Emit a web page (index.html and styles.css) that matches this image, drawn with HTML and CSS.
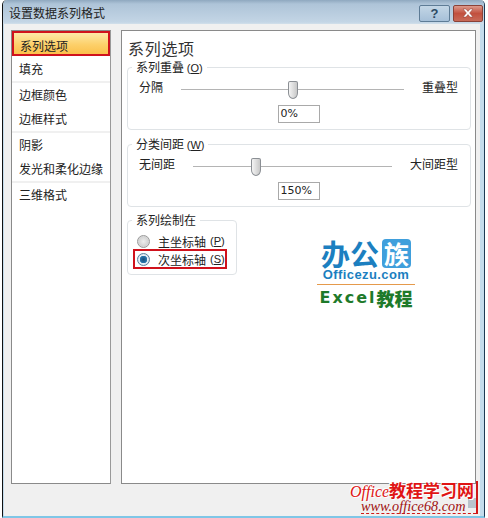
FILE: index.html
```html
<!DOCTYPE html>
<html lang="zh-CN">
<head>
  <meta charset="UTF-8">
  <title>设置数据系列格式</title>
  <link rel="stylesheet" href="styles.css">
</head>
<body>
  <div class="window">
    <header class="titlebar">
      <span class="title">设置数据系列格式</span>
      <div class="caption-btns">
        <span class="cap-btn help">?</span>
        <span class="cap-btn close">
          <svg width="14" height="10" viewBox="0 0 14 10"><path d="M2 1h3l2 2.4L9 1h3L8.6 5 12 9H9L7 6.6 5 9H2l3.4-4z" fill="#fff" stroke="#8a3a30" stroke-width=".5"/></svg>
        </span>
      </div>
    </header>

    <div class="client">
      <nav class="side">
        <div class="side-group">
          <div class="side-item selected">系列选项</div>
          <div class="side-item">填充</div>
        </div>
        <div class="side-group">
          <div class="side-item">边框颜色</div>
          <div class="side-item">边框样式</div>
        </div>
        <div class="side-group">
          <div class="side-item">阴影</div>
          <div class="side-item">发光和柔化边缘</div>
        </div>
        <div class="side-group">
          <div class="side-item">三维格式</div>
        </div>
      </nav>

      <main class="panel">
        <h1 class="panel-title">系列选项</h1>

        <fieldset class="group">
          <legend>系列重叠 <span class="key">(<u>O</u>)</span></legend>
          <div class="slider-row">
            <span>分隔</span>
            <div class="track"><span class="thumb" style="left:107px"></span></div>
            <span>重叠型</span>
          </div>
          <div class="value">0%</div>
        </fieldset>

        <fieldset class="group">
          <legend>分类间距 <span class="key">(<u>W</u>)</span></legend>
          <div class="slider-row">
            <span>无间距</span>
            <div class="track"><span class="thumb" style="left:58px"></span></div>
            <span>大间距型</span>
          </div>
          <div class="value">150%</div>
        </fieldset>

        <div class="bottom-row">
          <fieldset class="group plot-on">
            <legend>系列绘制在</legend>
            <div class="radio-row"><span class="radio"></span>主坐标轴 <span class="key">(<u>P</u>)</span></div>
            <div class="radio-row marked"><span class="radio on"></span>次坐标轴 <span class="key">(<u>S</u>)</span></div>
          </fieldset>

          <div class="logo">
            <div class="logo-cn">办公<span class="logo-box">族</span></div>
            <div class="logo-en">Officezu.com</div>
            <div class="logo-sub">Excel<span>教程</span></div>
          </div>
        </div>
      </main>
    </div>

    <div class="grip"></div>
    <div class="watermark">
      <div class="wm-top">Office<b>教程学习网</b></div>
      <div class="wm-url">www.office68.com</div>
    </div>
  </div>
</body>
</html>
```

FILE: styles.css
```css
:root {
  --cjk: "Noto Sans CJK SC", "Liberation Sans", sans-serif;
  --line: #dfe3e6;
  --panel-border: #8a8a8a;
  --text: #222;
}
html, body {
  margin: 0;
  padding: 0;
  background: #fff;
}
body {
  width: 488px;
  height: 518px;
  overflow: hidden;
  font-family: var(--cjk);
  font-size: 12px;
  color: var(--text);
}
.window {
  position: relative;
  box-sizing: border-box;
  margin-left: 2px;
  width: 483px;
  height: 518px;
  display: flex;
  flex-direction: column;
  background: #c4dcec;
  border-left: 1px solid #111;
  border-right: 1px solid #1d3a55;
  border-bottom: 2px solid #7fc6e6;
  border-radius: 5px 5px 0 0;
}
.titlebar {
  height: 24px;
  flex: none;
  display: flex;
  align-items: center;
  justify-content: space-between;
  padding: 0 1px 0 6px;
  background: linear-gradient(to bottom, #8fa8bf 0, #aec4d8 4px, #c3d5e5 22px, #d2e0ea 24px);
  border-radius: 5px 5px 0 0;
}
.title {
  font-size: 12px;
  line-height: 24px;
  margin-top: 2px;
}
.caption-btns {
  display: flex;
  gap: 3px;
  margin-top: 2px;
}
.cap-btn {
  display: flex;
  align-items: center;
  justify-content: center;
  height: 17px;
  box-sizing: border-box;
  border: 1px solid #5e7c96;
  border-radius: 2px;
}
.help {
  width: 31px;
  background: linear-gradient(to bottom, #c3d6e6, #a6c0d8);
  color: #2d4a64;
  font: bold 13px "Liberation Sans", sans-serif;
}
.close {
  width: 30px;
  border-color: #8a4238;
  background: linear-gradient(to bottom, #dc9a8c, #c2503e 50%, #c86a58);
}
.client {
  flex: 1;
  display: flex;
  gap: 10px;
  margin: 0 4px 0 1px;
  padding: 6px 4px 0 7px;
  background: #f0f0f0;
}
.side {
  width: 100px;
  height: 454px;
  box-sizing: border-box;
  flex: none;
  background: #fff;
  border: 1px solid var(--panel-border);
  border-right-color: #999;
  padding-top: 1px;
}
.side-group {
  border-bottom: 2px solid #f0f0f0;
}
.side-group:last-child {
  border-bottom: none;
}
.side-item {
  height: 24px;
  line-height: 24px;
  padding-left: 7px;
  white-space: nowrap;
}
.side-item.selected {
  height: 25px;
  line-height: 25px;
  margin: -1px 0 1px;
  box-sizing: border-box;
  padding-left: 6px;
  border: 2px solid #d0121c;
  background: linear-gradient(to bottom, #fde9a8, #fdd06a 55%, #fbc04c);
}
.panel {
  flex: 1;
  height: 454px;
  box-sizing: border-box;
  background: #fff;
  border: 1px solid var(--panel-border);
  padding: 6px 4px 0 5px;
}
.panel-title {
  margin: 0 0 0 1px;
  font-size: 16px;
  font-weight: 400;
  letter-spacing: .7px;
  line-height: 22px;
  color: #333;
}
.group {
  margin: 1px 0 0;
  padding: 0 12px 0 11px;
  width: 344px;
  height: 70px;
  box-sizing: border-box;
  border: 1px solid var(--line);
  border-radius: 4px;
  min-width: 0;
}
.group + .group {
  margin-top: 7px;
}
.group legend {
  margin-left: -7px;
  padding: 0 4px;
  font-size: 12px;
  line-height: 14px;
}
.key {
  font-family: "Liberation Sans", sans-serif;
  font-size: 11px;
}
.slider-row {
  display: flex;
  gap: 18px;
  height: 24px;
  align-items: center;
  line-height: 24px;
}
.track {
  position: relative;
  flex: 1;
  height: 1px;
  margin-top: 5px;
  background: #b4b4b4;
}
.thumb {
  position: absolute;
  top: -8px;
  width: 10px;
  height: 18px;
  background: linear-gradient(to right, #f4f4f4, #c8c8c8);
  border: 1px solid #8b8f94;
  box-sizing: border-box;
  border-radius: 2px 2px 5px 5px / 2px 2px 6px 6px;
}
.value {
  box-sizing: border-box;
  width: 42px;
  height: 18px;
  margin: 6px auto 0;
  padding-left: 2px;
  border: 1px solid #a9a9a9;
  font: 11px/16px "DejaVu Sans", sans-serif;
}
.bottom-row {
  display: flex;
  margin-top: 6px;
}
.plot-on {
  width: 110px;
  height: 62px;
  padding: 0;
  flex: none;
  margin-top: 0;
}
.plot-on legend {
  margin-left: 4px;
}
.radio-row {
  position: relative;
  display: flex;
  align-items: center;
  height: 18px;
  padding-left: 9px;
  white-space: nowrap;
}
.radio-row:first-of-type {
  margin-top: 5px;
}
.radio-row .key {
  margin-left: 4px;
}
.marked {
  margin-top: 0;
}
.marked::after {
  content: "";
  position: absolute;
  left: 5px;
  top: -1px;
  width: 94px;
  height: 20px;
  box-sizing: border-box;
  border: 2px solid #d0121c;
}
.radio {
  box-sizing: border-box;
  width: 13px;
  height: 13px;
  margin-right: 8px;
  border-radius: 50%;
  border: 1px solid #9a9a9a;
  background: radial-gradient(circle, #eee 0, #d4d4d4 60%, #f4f4f4 100%);
}
.radio.on {
  border-color: #5a7f9c;
  background: radial-gradient(circle, #174f7c 0, #2b78ae 3.5px, #e8f0f6 4px, #bcd2e2 100%);
}
.logo {
  margin: 25px 0 0 80px;
  width: 98px;
  text-align: center;
}
.logo-cn {
  display: flex;
  justify-content: center;
  align-items: center;
  height: 30px;
  gap: 1px;
  font-size: 29px;
  font-weight: 700;
  line-height: 30px;
  color: #1c7fc0;
}
.logo-box {
  width: 29px;
  height: 29px;
  border-radius: 4px;
  margin-left: 2px;
  background: #3f9fdc;
  color: #fff;
  font-size: 25px;
  line-height: 28px;
}
.logo-en {
  font: bold 13px/13px "Liberation Sans", sans-serif;
  letter-spacing: .4px;
  color: #1c7fc0;
  padding-bottom: 3px;
  border-bottom: 1px solid #e59a4c;
}
.logo-sub {
  display: flex;
  justify-content: center;
  align-items: center;
  margin-top: 4px;
  font: bold 16px/18px "DejaVu Sans", sans-serif;
  letter-spacing: 2px;
  color: #1e7a2a;
  white-space: nowrap;
}
.logo-sub span {
  font-family: var(--cjk);
  font-weight: 900;
  font-size: 18px;
  letter-spacing: 0;
}
.grip {
  position: absolute;
  right: 8px;
  bottom: 8px;
  width: 8px;
  height: 10px;
  background: #b9c3cc;
}
.watermark {
  position: absolute;
  left: 347px;
  top: 481px;
  width: 126px;
  white-space: nowrap;
  font-family: "Liberation Serif", serif;
  font-style: italic;
  border-right: 2px solid #d01818;
}
.wm-top {
  height: 17px;
  font-size: 16px;
  line-height: 17px;
  color: #e01414;
  text-shadow: 1px 1px 0 #fff, -1px -1px 0 #fff;
}
.wm-top b {
  font-family: var(--cjk);
  font-style: normal;
  font-size: 17px;
  font-weight: 700;
}
.wm-url {
  margin-left: 11px;
  padding-top: 1px;
  border-bottom: 1px dashed #d01818;
  font-size: 14.3px;
  line-height: 14px;
  color: #a01010;
}
```
